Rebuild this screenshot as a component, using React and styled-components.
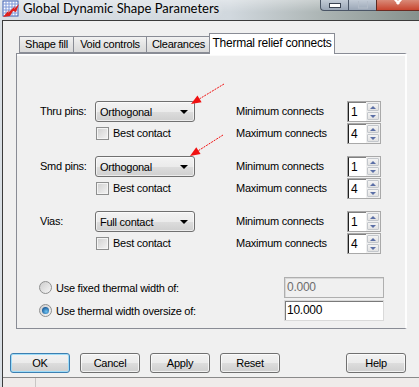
import React from 'react';
import styled, { createGlobalStyle } from 'styled-components';

const Global = createGlobalStyle`
  html, body { margin: 0; padding: 0; background: #f0f0f0; }
  body {
    font-family: "Liberation Sans", Arial, sans-serif;
    font-size: 11px;
    letter-spacing: -0.25px;
    color: #000;
  }
`;

const groups = [
  { label: 'Thru pins:', value: 'Orthogonal', min: '1', max: '4' },
  { label: 'Smd pins:', value: 'Orthogonal', min: '1', max: '4' },
  { label: 'Vias:', value: 'Full contact', min: '1', max: '4' },
];

const tabs = [
  { name: 'Shape fill', w: 54 },
  { name: 'Void controls', w: 73 },
  { name: 'Clearances', w: 64 },
  { name: 'Thermal relief connects', w: 126 },
];

function AppIcon() {
  return (
    <svg width="18" height="18" viewBox="0 0 18 18">
      <rect x="1" y="1" width="15" height="15" fill="#fff" stroke="#3c5fb0" />
      <path d="M4 1v15M7 1v15M10 1v15M13 1v15M1 4h15M1 7h15M1 10h15M1 13h15" stroke="#7d97d8" strokeWidth="1" />
      <path d="M1 17 L7 10 L6 13 L13 6 L12 9 L17 4 L14 12 L11 11 L8 16 Z" fill="#e0201c" />
    </svg>
  );
}

function Arrow({ x1, y1, x2, y2 }) {
  const dx = x2 - x1;
  const dy = y2 - y1;
  const len = Math.hypot(dx, dy);
  const ux = dx / len;
  const uy = dy / len;
  const bx = x2 - ux * 10;
  const by = y2 - uy * 10;
  const px = -uy * 4;
  const py = ux * 4;
  return (
    <g>
      <line x1={x1} y1={y1} x2={bx} y2={by} stroke="#f01010" strokeWidth="1" strokeDasharray="2 1" />
      <polygon points={`${x2},${y2} ${bx + px},${by + py} ${bx - px},${by - py}`} fill="#f01010" />
    </g>
  );
}

function Spin({ value }) {
  return (
    <Spinner>
      <SpinValue>{value}</SpinValue>
      <SpinBtns>
        <SpinBtn><UpTri /></SpinBtn>
        <SpinBtn><DownTri /></SpinBtn>
      </SpinBtns>
    </Spinner>
  );
}

export default function App() {
  return (
    <Window>
      <Global />
      <TitleBar>
        <AppIcon />
        <Title>Global Dynamic Shape Parameters</Title>
        <Controls>
          <CtlBtn $w={28}>
            <svg width="12" height="5"><rect x="0.5" y="0.5" width="11" height="4" fill="#fff" stroke="#3a4352" /></svg>
          </CtlBtn>
          <CtlBtn $w={28}>
            <svg width="10" height="8"><rect x="0.5" y="-3" width="9" height="10" fill="none" stroke="#b3bcc8" /></svg>
          </CtlBtn>
          <CloseBtn>
            <svg width="12" height="7"><path d="M1 -3 L7 4 M11 -3 L5 4" stroke="#fff" strokeWidth="2.4" /></svg>
          </CloseBtn>
        </Controls>
      </TitleBar>
      <Client>
        <TabRow>
          {tabs.map((t, i) => (
            <Tab key={t.name} $w={t.w} $active={i === 3}>{t.name}</Tab>
          ))}
        </TabRow>
        <Panel>
          {groups.map((g) => (
            <Group key={g.label}>
              <RowLabel>{g.label}</RowLabel>
              <ControlCol>
                <Select>
                  <span>{g.value}</span>
                  <Caret />
                </Select>
                <CheckRow>
                  <Check />
                  <span>Best contact</span>
                </CheckRow>
              </ControlCol>
              <ConnCol>
                <ConnRow>
                  <ConnLabel>Minimum connects</ConnLabel>
                  <Spin value={g.min} />
                </ConnRow>
                <ConnRow>
                  <ConnLabel>Maximum connects</ConnLabel>
                  <Spin value={g.max} />
                </ConnRow>
              </ConnCol>
            </Group>
          ))}
          <RadioBlock>
            <RadioRow>
              <RadioLabel>
                <Radio />
                <span>Use fixed thermal width of:</span>
              </RadioLabel>
              <Field $disabled>0.000</Field>
            </RadioRow>
            <RadioRow>
              <RadioLabel>
                <Radio $checked />
                <span>Use thermal width oversize of:</span>
              </RadioLabel>
              <Field>10.000</Field>
            </RadioRow>
          </RadioBlock>
        </Panel>
        <ButtonRow>
          <Button $default>OK</Button>
          <Button>Cancel</Button>
          <Button>Apply</Button>
          <Button>Reset</Button>
          <Button $push>Help</Button>
        </ButtonRow>
        <StatusBar>
          <StatusCell />
        </StatusBar>
      </Client>
      <Arrows width="419" height="387">
        <Arrow x1={224} y1={84} x2={191} y2={104} />
        <Arrow x1={223} y1={135} x2={190} y2={156} />
      </Arrows>
    </Window>
  );
}

const Window = styled.div`
  position: relative;
  width: 419px;
  height: 387px;
  overflow: hidden;
  display: flex;
  flex-direction: column;
  background: linear-gradient(to right, #d9dfe5 0%, #d1d8de 55%, #aab3b2 78%, #86918d 100%);
`;

const TitleBar = styled.div`
  height: 20px;
  display: flex;
  align-items: flex-start;
  padding-left: 2px;
  background: linear-gradient(to bottom, rgba(255,255,255,0.35), rgba(255,255,255,0) 60%);
`;

const Title = styled.div`
  font-family: "Lato", "Noto Sans", sans-serif;
  font-size: 13px;
  letter-spacing: 0;
  line-height: 17px;
  margin-left: 3px;
  color: #000;
  text-shadow: 0 0 6px rgba(255,255,255,0.9);
`;

const Controls = styled.div`
  margin-left: auto;
  display: flex;
  height: 11px;
`;

const CtlBtn = styled.div`
  width: ${(p) => p.$w}px;
  height: 11px;
  box-sizing: border-box;
  border: 1px solid #4a5566;
  border-top: none;
  border-right: none;
  background: linear-gradient(to bottom, #c2cbd6, #9aa6b6);
  display: flex;
  align-items: center;
  justify-content: center;
  &:first-child { border-bottom-left-radius: 4px; }
`;

const CloseBtn = styled.div`
  width: 43px;
  height: 11px;
  box-sizing: border-box;
  border-left: 1px solid #5a2a22;
  border-bottom: 1px solid #6a2a22;
  background: linear-gradient(to bottom, #d98a78, #c8452f);
  display: flex;
  align-items: flex-start;
  justify-content: center;
`;

const Client = styled.div`
  flex: 1;
  margin-left: 2px;
  display: flex;
  flex-direction: column;
  background: #f0f0f0;
  border-left: 1px solid #3b3b3b;
  border-top: 1px solid #3b3b3b;
  padding-top: 12px;
`;

const TabRow = styled.div`
  display: flex;
  align-items: flex-end;
  height: 20px;
  margin-left: 16px;
  position: relative;
  z-index: 1;
`;

const Tab = styled.div`
  box-sizing: border-box;
  width: ${(p) => p.$w}px;
  height: ${(p) => (p.$active ? 21 : 17)}px;
  margin-bottom: ${(p) => (p.$active ? -1 : 0)}px;
  margin-left: ${(p) => (p.$active ? -1 : 0)}px;
  border: 1px solid #898c95;
  border-bottom: ${(p) => (p.$active ? 'none' : '1px solid #898c95')};
  border-right-width: ${(p) => (p.$active ? 1 : 0)}px;
  background: ${(p) => (p.$active ? '#fff' : 'linear-gradient(to bottom, #f2f2f2, #e4e4e4 50%, #d9d9d9)')};
  font-size: ${(p) => (p.$active ? 12 : 11)}px;
  line-height: ${(p) => (p.$active ? 18 : 15)}px;
  text-align: center;
  white-space: nowrap;
  &:nth-child(3) { border-right-width: 0; }
`;

const Panel = styled.div`
  box-sizing: border-box;
  width: 391px;
  height: 276px;
  margin-left: 13px;
  border: 1px solid #898c95;
  border-right: 2px solid #fdfdfd;
  box-shadow: inset 0 1px 0 #fff, inset 0 2px 0 #fafafa;
  padding: 47px 0 0 23px;
  display: flex;
  flex-direction: column;
  gap: 12px;
`;

const Group = styled.div`
  display: flex;
  align-items: flex-start;
  height: 43px;
`;

const RowLabel = styled.div`
  width: 55px;
  line-height: 21px;
`;

const ControlCol = styled.div`
  width: 100px;
  display: flex;
  flex-direction: column;
  gap: 5px;
`;

const Select = styled.div`
  box-sizing: border-box;
  height: 21px;
  border: 1px solid #707070;
  border-radius: 3px;
  background: linear-gradient(to bottom, #f3f3f3, #ebebeb 50%, #dddddd 51%, #cfcfcf);
  display: flex;
  align-items: center;
  padding: 0 4px;
  box-shadow: inset 0 0 0 1px rgba(255,255,255,0.6);
  span { flex: 1; }
`;

const Caret = styled.i`
  width: 0;
  height: 0;
  border-left: 4px solid transparent;
  border-right: 4px solid transparent;
  border-top: 4px solid #000;
  margin-right: 2px;
`;

const CheckRow = styled.div`
  display: flex;
  align-items: center;
  gap: 4px;
  height: 13px;
  line-height: 13px;
`;

const Check = styled.i`
  box-sizing: border-box;
  width: 13px;
  height: 13px;
  margin-left: 1px;
  border: 1px solid #8e8f8f;
  background: linear-gradient(135deg, #cfcfcf, #f4f4f4);
  box-shadow: inset 0 0 0 1px #f4f4f4;
`;

const ConnCol = styled.div`
  margin-left: 41px;
  display: flex;
  flex-direction: column;
  gap: 1px;
`;

const ConnRow = styled.div`
  display: flex;
  height: 21px;
`;

const ConnLabel = styled.div`
  width: 111px;
  line-height: 21px;
`;

const Spinner = styled.div`
  box-sizing: border-box;
  width: 34px;
  height: 21px;
  border: 1px solid #a9a9a9;
  display: flex;
`;

const SpinValue = styled.div`
  width: 15px;
  background: #fff;
  border-left: 1px solid #202020;
  border-top: 1px solid #808080;
  padding-left: 2px;
  line-height: 18px;
  font-size: 12px;
`;

const SpinBtns = styled.div`
  flex: 1;
  display: flex;
  flex-direction: column;
  padding: 1px;
  gap: 1px;
`;

const SpinBtn = styled.div`
  flex: 1;
  border: 1px solid #c3c7cc;
  border-radius: 1px;
  background: linear-gradient(to bottom, #f4f4f4, #e2e2e2);
  display: flex;
  align-items: center;
  justify-content: center;
`;

const UpTri = styled.i`
  width: 0;
  height: 0;
  border-left: 3px solid transparent;
  border-right: 3px solid transparent;
  border-bottom: 3px solid #5b6fa6;
`;

const DownTri = styled.i`
  width: 0;
  height: 0;
  border-left: 3px solid transparent;
  border-right: 3px solid transparent;
  border-top: 3px solid #5b6fa6;
`;

const RadioBlock = styled.div`
  margin-top: 11px;
  display: flex;
  flex-direction: column;
  gap: 2px;
`;

const RadioRow = styled.div`
  display: flex;
  height: 21px;
`;

const RadioLabel = styled.div`
  width: 245px;
  display: flex;
  align-items: center;
  gap: 4px;
  margin-left: -1px;
`;

const Radio = styled.i`
  position: relative;
  box-sizing: border-box;
  width: 13px;
  height: 13px;
  border-radius: 50%;
  border: 1px solid #8e8f8f;
  background: linear-gradient(135deg, #cdcdcd, #f6f6f6);
  &::after {
    content: '';
    display: ${(p) => (p.$checked ? 'block' : 'none')};
    position: absolute;
    left: 2px;
    top: 2px;
    width: 7px;
    height: 7px;
    border-radius: 50%;
    background: radial-gradient(circle at 60% 65%, #6ec3f2, #1c5e9c 70%, #17386a);
  }
`;

const Field = styled.div`
  box-sizing: border-box;
  width: 100px;
  height: 21px;
  border: 1px solid ${(p) => (p.$disabled ? '#afafaf' : '#d9d9d9')};
  box-shadow: inset 1px 1px 0 ${(p) => (p.$disabled ? '#d9d9d9' : '#7a7a7a')};
  background: ${(p) => (p.$disabled ? '#f0f0f0' : '#fff')};
  color: ${(p) => (p.$disabled ? '#6d6d6d' : '#000')};
  padding-left: 2px;
  line-height: 19px;
  font-size: 12px;
`;

const ButtonRow = styled.div`
  display: flex;
  gap: 10px;
  margin-top: 24px;
  padding: 0 13px 0 7px;
`;

const Button = styled.div`
  box-sizing: border-box;
  width: 60px;
  height: 20px;
  border: 1px solid ${(p) => (p.$default ? '#3c7fb1' : '#707070')};
  border-radius: 3px;
  background: linear-gradient(to bottom, #f2f2f2, #ebebeb 50%, #dddddd 51%, #cfcfcf);
  box-shadow: inset 0 0 0 1px ${(p) => (p.$default ? '#9fdcf8' : 'rgba(255,255,255,0.7)')};
  text-align: center;
  line-height: 18px;
  margin-left: ${(p) => (p.$push ? 'auto' : '0')};
`;

const StatusBar = styled.div`
  flex: 1;
  margin-top: 4px;
  border-top: 1px solid #8a8a8a;
  background: #efebea;
  display: flex;
`;

const StatusCell = styled.div`
  width: 32px;
  border-right: 1px solid #c9c5c4;
`;

const Arrows = styled.svg`
  position: absolute;
  left: 0;
  top: 0;
  pointer-events: none;
`;
